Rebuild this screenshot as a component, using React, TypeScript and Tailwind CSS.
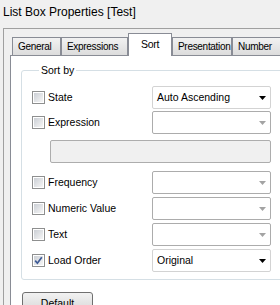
import { ReactNode } from 'react'

interface Tab {
  label: string
  width: string
  active?: boolean
}

const tabs: Tab[] = [
  { label: 'General', width: 'w-[49px]' },
  { label: 'Expressions', width: 'w-[67px]' },
  { label: 'Sort', width: 'w-[44px]', active: true },
  { label: 'Presentation', width: 'w-[60px]' },
  { label: 'Number', width: 'w-[80px]' },
]

function CheckBox({ checked }: { checked?: boolean }) {
  return (
    <div className="flex h-[13px] w-[13px] shrink-0 items-center justify-center border border-[#8e8f8f] bg-white p-px">
      <div className="relative h-full w-full bg-gradient-to-br from-[#cbcfd5] to-[#f6f6f6]">
        {checked && (
          <svg width="9" height="9" viewBox="0 0 9 9" className="absolute left-0 top-0">
            <path d="M1.2 4.6 L3.4 7.2 L7.8 1.2" fill="none" stroke="#3d5a95" strokeWidth="1.7" />
          </svg>
        )}
      </div>
    </div>
  )
}

function Combo({ value, enabled }: { value?: string; enabled?: boolean }) {
  return (
    <div
      className={`flex h-[23px] w-[119px] items-center justify-between rounded-[2px] border bg-white pl-[4px] pr-[4px] ${
        enabled ? 'border-[#d3d3d3]' : 'border-[#acacac]'
      }`}
    >
      <span className="text-black">{value}</span>
      <svg width="7" height="4" viewBox="0 0 7 4">
        <path d="M0 0H7L3.5 4Z" fill={enabled ? '#000000' : '#a3a3a3'} />
      </svg>
    </div>
  )
}

function Row({ label, checked, children }: { label: string; checked?: boolean; children: ReactNode }) {
  return (
    <div className="flex h-[23px] items-center">
      <div className="flex w-[120px] items-center gap-[3px]">
        <CheckBox checked={checked} />
        <span>{label}</span>
      </div>
      {children}
    </div>
  )
}

export default function App() {
  return (
    <div className="h-[305px] w-[280px] overflow-hidden bg-[#f0f0f0] font-['Liberation_Sans',Arial,sans-serif] text-[10.5px] text-black">
      {/* Título */}
      <div className="h-[28px] pl-[3px] pt-[4px] text-[12px] leading-[16px]">List Box Properties [Test]</div>

      {/* Marco */}
      <div className="ml-[3px] h-[300px] border-l border-t border-[#a0a0a0] pl-[6px]">
        {/* Pestañas */}
        <div className="flex h-[26px] items-end pl-[2px] text-[10px] tracking-[-0.3px]">
          {tabs.map((t) =>
            t.active ? (
              <div
                key={t.label}
                className={`relative z-10 -mb-px flex h-[23px] ${t.width} shrink-0 justify-center border border-b-0 border-[#898c95] bg-white pt-[3px] text-[10.5px]`}
              >
                {t.label}
              </div>
            ) : (
              <div
                key={t.label}
                className={`flex h-[18px] ${t.width} shrink-0 items-center overflow-hidden whitespace-nowrap border border-b-0 border-[#898c95] bg-gradient-to-b from-[#f2f2f2] to-[#dcdcdc] pl-[5px]`}
              >
                {t.label}
              </div>
            )
          )}
        </div>

        {/* Panel */}
        <div className="h-[260px] border-l border-t border-[#898c95] bg-white">
          <fieldset className="ml-[10px] mt-[8px] w-[290px] rounded-[3px] border border-[#d5dfe5] pb-[7px] pl-[10px] pt-[9px]">
            <legend className="ml-[7px] px-[2px] leading-[13px]">Sort by</legend>
            <div className="flex flex-col">
              <Row label="State">
                <Combo value="Auto Ascending" enabled />
              </Row>
              <div className="mt-[2px]">
                <Row label="Expression">
                  <Combo />
                </Row>
              </div>
              <div className="ml-[18px] mt-[6px] h-[23px] w-[221px] rounded-[2px] border border-[#adadad] bg-[#f0f0f0]" />
              <div className="mt-[8px] flex flex-col gap-[3px]">
                <Row label="Frequency">
                  <Combo />
                </Row>
                <Row label="Numeric Value">
                  <Combo />
                </Row>
                <Row label="Text">
                  <Combo />
                </Row>
                <Row label="Load Order" checked>
                  <Combo value="Original" enabled />
                </Row>
              </div>
            </div>
          </fieldset>

          <button className="ml-[11px] mt-[12px] flex h-[23px] w-[71px] items-center justify-center rounded-[3px] border border-[#707070] bg-gradient-to-b from-[#f2f2f2] to-[#d5d5d5]">
            Default
          </button>
        </div>
      </div>
    </div>
  )
}
